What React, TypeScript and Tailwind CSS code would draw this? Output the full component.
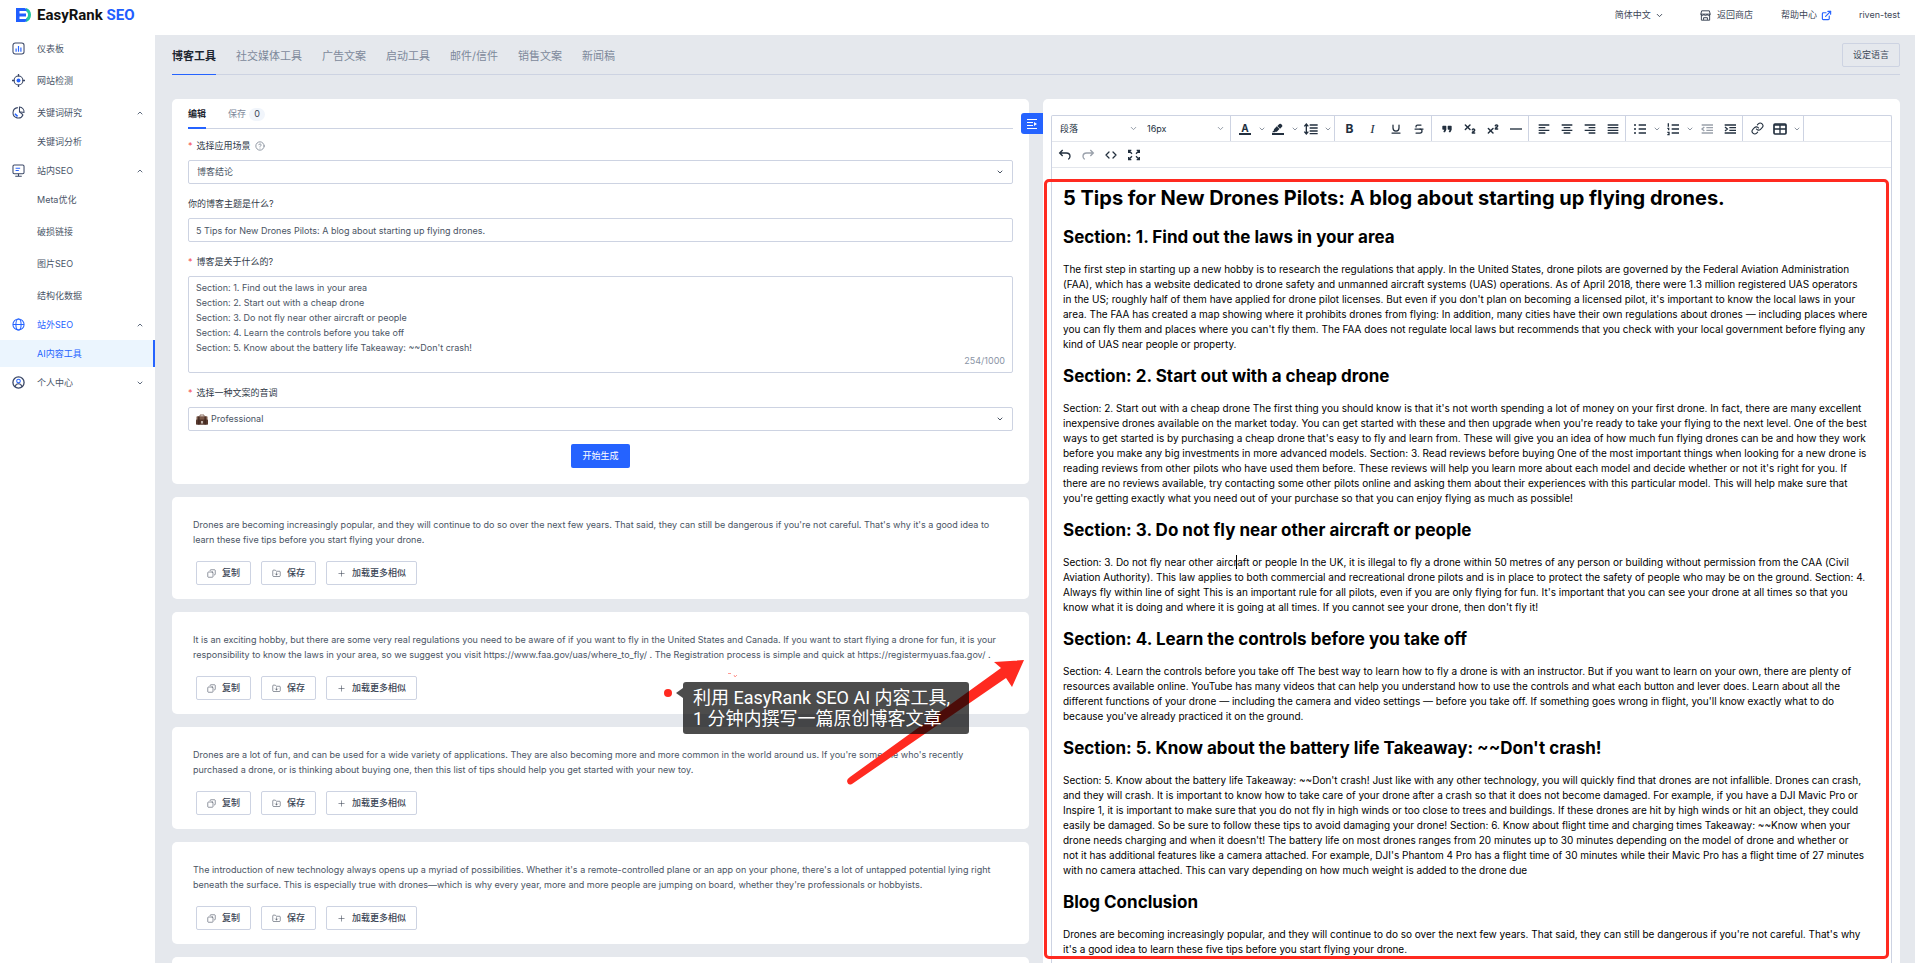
import React, { useState } from "react";
import {
  ChevronDown,
  ChevronUp,
  CircleHelp,
  Copy,
  FolderDown,
  Plus,
  ExternalLink,
  Underline,
  Strikethrough,
  Subscript,
  Superscript,
  Link as LinkIcon,
  Code,
} from "lucide-react";

const toolTabs = ["博客工具", "社交媒体工具", "广告文案", "启动工具", "邮件/信件", "销售文案", "新闻稿"];

const outline = `Section: 1. Find out the laws in your area
Section: 2. Start out with a cheap drone
Section: 3. Do not fly near other aircraft or people
Section: 4. Learn the controls before you take off
Section: 5. Know about the battery life Takeaway: ~~Don't crash!`;

const results = [
  `Drones are becoming increasingly popular, and they will continue to do so over the next few years. That said, they can still be dangerous if you're not careful. That's why it's a good idea to
learn these five tips before you start flying your drone.`,
  `It is an exciting hobby, but there are some very real regulations you need to be aware of if you want to fly in the United States and Canada. If you want to start flying a drone for fun, it is your
responsibility to know the laws in your area, so we suggest you visit https://www.faa.gov/uas/where_to_fly/ . The Registration process is simple and quick at https://registermyuas.faa.gov/ .`,
  `Drones are a lot of fun, and can be used for a wide variety of applications. They are also becoming more and more common in the world around us. If you're someone who's recently
purchased a drone, or is thinking about buying one, then this list of tips should help you get started with your new toy.`,
  `The introduction of new technology always opens up a myriad of possibilities. Whether it's a remote-controlled plane or an app on your phone, there's a lot of untapped potential lying right
beneath the surface. This is especially true with drones—which is why every year, more and more people are jumping on board, whether they're professionals or hobbyists.`,
];

const sections = [
  {
    title: "Section: 1. Find out the laws in your area",
    body: `The first step in starting up a new hobby is to research the regulations that apply. In the United States, drone pilots are governed by the Federal Aviation Administration
(FAA), which has a website dedicated to drone safety and unmanned aircraft systems (UAS) operations. As of April 2018, there were 1.3 million registered UAS operators
in the US; roughly half of them have applied for drone pilot licenses. But even if you don't plan on becoming a licensed pilot, it's important to know the local laws in your
area. The FAA has created a map showing where it prohibits drones from flying: In addition, many cities have their own regulations about drones — including places where
you can fly them and places where you can't fly them. The FAA does not regulate local laws but recommends that you check with your local government before flying any
kind of UAS near people or property.`,
  },
  {
    title: "Section: 2. Start out with a cheap drone",
    body: `Section: 2. Start out with a cheap drone The first thing you should know is that it's not worth spending a lot of money on your first drone. In fact, there are many excellent
inexpensive drones available on the market today. You can get started with these and then upgrade when you're ready to take your flying to the next level. One of the best
ways to get started is by purchasing a cheap drone that's easy to fly and learn from. These will give you an idea of how much fun flying drones can be and how they work
before you make any big investments in more advanced models. Section: 3. Read reviews before buying One of the most important things when looking for a new drone is
reading reviews from other pilots who have used them before. These reviews will help you learn more about each model and decide whether or not it's right for you. If
there are no reviews available, try contacting some other pilots online and asking them about their experiences with this particular model. This will help make sure that
you're getting exactly what you need out of your purchase so that you can enjoy flying as much as possible!`,
  },
  {
    title: "Section: 3. Do not fly near other aircraft or people",
    body: `Section: 3. Do not fly near other aircraft or people In the UK, it is illegal to fly a drone within 50 metres of any person or building without permission from the CAA (Civil
Aviation Authority). This law applies to both commercial and recreational drone pilots and is in place to protect the safety of people who may be on the ground. Section: 4.
Always fly within line of sight This is an important rule for all pilots, even if you are only flying for fun. It's important that you can see your drone at all times so that you
know what it is doing and where it is going at all times. If you cannot see your drone, then don't fly it!`,
  },
  {
    title: "Section: 4. Learn the controls before you take off",
    body: `Section: 4. Learn the controls before you take off The best way to learn how to fly a drone is with an instructor. But if you want to learn on your own, there are plenty of
resources available online. YouTube has many videos that can help you understand how to use the controls and what each button and lever does. Learn about all the
different functions of your drone — including the camera and video settings — before you take off. If something goes wrong in flight, you'll know exactly what to do
because you've already practiced it on the ground.`,
  },
  {
    title: "Section: 5. Know about the battery life Takeaway: ~~Don't crash!",
    body: `Section: 5. Know about the battery life Takeaway: ~~Don't crash! Just like with any other technology, you will quickly find that drones are not infallible. Drones can crash,
and they will crash. It is important to know how to take care of your drone after a crash so that it does not become damaged. For example, if you have a DJI Mavic Pro or
Inspire 1, it is important to make sure that you do not fly in high winds or too close to trees and buildings. If these drones are hit by high winds or hit an object, they could
easily be damaged. So be sure to follow these tips to avoid damaging your drone! Section: 6. Know about flight time and charging times Takeaway: ~~Know when your
drone needs charging and when it doesn't! The battery life on most drones ranges from 20 minutes up to 30 minutes depending on the model of drone and whether or
not it has additional features like a camera attached. For example, DJI's Phantom 4 Pro has a flight time of 30 minutes while their Mavic Pro has a flight time of 27 minutes
with no camera attached. This can vary depending on how much weight is added to the drone due`,
  },
  {
    title: "Blog Conclusion",
    body: `Drones are becoming increasingly popular, and they will continue to do so over the next few years. That said, they can still be dangerous if you're not careful. That's why
it's a good idea to learn these five tips before you start flying your drone.`,
  },
];

function MenuIcon({ name }: { name: string }) {
  return (
    <svg viewBox="0 0 20 20" className="size-[13px] shrink-0" fill="none" stroke="#3a4766" strokeWidth="1.6">
      {name === "board" && (
        <>
          <rect x="1.5" y="1.5" width="17" height="17" rx="3.5" />
          <path d="M6.3 15V10M10 15V6M13.7 15V8.5" stroke="#2563ff" strokeWidth="1.8" />
        </>
      )}
      {name === "target" && (
        <>
          <circle cx="10" cy="10" r="6.8" />
          <path d="M10 0v4M10 16v4M0 10h4M16 10h4" strokeWidth="2" />
          <circle cx="10" cy="10" r="3" fill="#2563ff" stroke="none" />
        </>
      )}
      {name === "pie" && (
        <>
          <path d="M9 2.5a8 8 0 1 0 8 11" />
          <path d="M11.500 1.500a7.500 7.500 0 0 1 7 8.500l-7-1z" />
          <path d="M11.500 9l5.500 4.500" />
          <path d="M4.500 12l4 4" stroke="#2563ff" strokeWidth="2.4" />
        </>
      )}
      {name === "screen" && (
        <>
          <rect x="1.5" y="1.5" width="17" height="13.5" rx="2" />
          <path d="M10 15v3.5M5 18.7h10" />
          <path d="M5.5 6.5h7M5.5 10h5" stroke="#2563ff" strokeWidth="1.8" />
        </>
      )}
      {name === "globe" && (
        <g stroke="#2563ff">
          <circle cx="10" cy="10" r="8.6" />
          <ellipse cx="10" cy="10" rx="4" ry="8.6" />
          <path d="M1.5 10h17" />
        </g>
      )}
      {name === "user" && (
        <>
          <circle cx="10" cy="10" r="8.6" strokeWidth="2" />
          <circle cx="10" cy="7.8" r="2.8" stroke="#2563ff" />
          <path d="M5 16.2c.6-3 2.4-4.4 5-4.4s4.400 1.400 5 4.400" />
        </>
      )}
    </svg>
  );
}

const menu = [
  { name: "仪表板", icon: "board" },
  { name: "网站检测", icon: "target" },
  { name: "关键词研究", icon: "pie", children: ["关键词分析"] },
  { name: "站内SEO", icon: "screen", children: ["Meta优化", "破损链接", "图片SEO", "结构化数据"] },
  { name: "站外SEO", icon: "globe", children: ["AI内容工具"], active: true },
  { name: "个人中心", icon: "user", closed: true },
];

function Sidebar() {
  return (
    <aside className="w-[155px] shrink-0 bg-white text-[#4a5568]">
      <ul>
        {menu.map((item) => (
          <li key={item.name} className={item.children ? "" : "mb-[5px]"}>
            <a
              href="#"
              className={`flex h-[27px] items-center gap-3 pl-3 pr-[11px] ${item.active ? "text-[#2563ff]" : ""}`}
            >
              <MenuIcon name={item.icon} />
              <span className="flex-1">{item.name}</span>
              {item.children && <ChevronUp className="size-2 text-[#5f6b7e]" strokeWidth={3} />}
              {item.closed && <ChevronDown className="size-2 text-[#5f6b7e]" strokeWidth={3} />}
            </a>
            {item.children && (
              <ul className="my-[2px] flex flex-col gap-[5px]">
                {item.children.map((child) => (
                  <li key={child}>
                    <a
                      href="#"
                      className={`flex h-[27px] items-center pl-[37px] ${
                        item.active ? "border-r-2 border-[#2563ff] bg-[#ebf5fe] text-[#2563ff]" : ""
                      }`}
                    >
                      {child}
                    </a>
                  </li>
                ))}
              </ul>
            )}
          </li>
        ))}
      </ul>
    </aside>
  );
}

function Header() {
  return (
    <header className="flex h-[35px] shrink-0 items-center bg-white pl-4 pr-[15px] pb-[5px] text-[#3c4656]">
      <a href="#" className="flex items-center gap-[6px]">
        <svg viewBox="0 0 30 28" className="h-[14px] w-[15px]">
          <path d="M20 0c6.500 2 10 7 10 13.500C30 21 26 26 20 28v-7c2.500-1.500 4-4 4-7.500S22.500 8 20 6.500z" fill="#22c5a0" />
          <path d="M0 0h17q3 0 4 3v3H7v5h13v6H7v5h14v3q-1 3-4 3H0z" fill="#1f5eff" />
        </svg>
        <span className="font-['Roboto',sans-serif] text-[15px] font-bold leading-5 text-[#111]">
          EasyRank <span className="text-[#1f5eff]">SEO</span>
        </span>
      </a>
      <nav className="ml-auto flex items-center">
        <button className="flex items-center gap-1">
          简体中文 <ChevronDown className="size-[9px]" strokeWidth={2.5} />
        </button>
        <a href="#" className="ml-9 flex items-center gap-[6px]">
          <svg viewBox="0 0 20 20" className="size-[11px]" fill="none" stroke="currentColor" strokeWidth="1.8">
            <path d="M3 1.500h14l1.500 6H1.500zM2.500 7.500v11h15v-11M1.500 7.500c0 3.500 5.600 3.500 5.600 0 0 3.500 5.800 3.500 5.800 0 0 3.500 5.600 3.500 5.600 0M6.500 18v-4h7v4" />
          </svg>
          返回商店
        </a>
        <a href="#" className="ml-7 flex items-center gap-1">
          帮助中心 <ExternalLink className="size-[11px] text-[#2563ff]" strokeWidth={2.5} />
        </a>
        <a href="#" className="ml-[27px]">
          riven-test
        </a>
      </nav>
    </header>
  );
}

function Label({ htmlFor, required, children }: { htmlFor: string; required?: boolean; children: React.ReactNode }) {
  return (
    <label htmlFor={htmlFor} className="mt-[13px] mb-[7px] flex h-[14px] items-center gap-1 text-[#2f3947]">
      {required && <span className="text-[#f5484d]">*</span>}
      {children}
    </label>
  );
}

function Briefcase() {
  return (
    <svg viewBox="0 0 24 22" className="ml-[7px] h-[11px] w-3 shrink-0">
      <path d="M8 5V2h8v3" fill="none" stroke="#8a6f60" strokeWidth="2" />
      <rect x="1" y="4.500" width="22" height="8" rx="1.500" fill="#7b5a4a" />
      <rect x="0" y="11" width="24" height="10.500" rx="1.500" fill="#56382d" />
      <rect x="4.500" y="5" width="2.500" height="16" fill="#3f2720" />
      <rect x="17" y="5" width="2.500" height="16" fill="#3f2720" />
      <rect x="10.500" y="14" width="3" height="5" fill="#e8e0da" />
    </svg>
  );
}

const field = "w-full rounded-[2px] border border-[#cdd3e2] bg-white text-[#4a5464]";

function EditForm() {
  const [topic, setTopic] = useState("5 Tips for New Drones Pilots: A blog about starting up flying drones.");
  const [about, setAbout] = useState(outline);
  return (
    <section className="rounded-[5px] bg-white px-4 pb-4">
      <div className="mb-[-3px] flex h-[30px] items-stretch gap-[22px] border-b border-[#cdd3e2]">
        <button className="-mb-px border-b-2 border-[#2563ff] pt-[2px] font-bold text-[#1d2530]">编辑</button>
        <button className="flex items-center gap-[3px] pt-px text-[#7d899b]">
          保存
          <span className="flex h-[13px] w-4 items-center justify-center rounded-full bg-[#f1f5fb] text-[#3c4656]">0</span>
        </button>
      </div>
      <Label htmlFor="scene" required>
        选择应用场景
        <CircleHelp className="size-[10px] text-[#7d8794]" strokeWidth={2} />
      </Label>
      <div className={`${field} flex h-6 items-center`}>
        <select id="scene" className="h-full flex-1 appearance-none bg-transparent pl-2 outline-none">
          <option>博客结论</option>
        </select>
        <ChevronDown className="mr-2 size-2" strokeWidth={3} />
      </div>
      <Label htmlFor="topic">你的博客主题是什么?</Label>
      <input
        id="topic"
        className={`${field} block h-6 px-[7px] outline-none`}
        value={topic}
        onChange={(e) => setTopic(e.target.value)}
      />
      <Label htmlFor="about" required>
        博客是关于什么的?
      </Label>
      <div className="relative">
        <textarea
          id="about"
          className={`${field} block h-[97px] resize-none px-[7px] py-[3px] leading-[15px] outline-none`}
          value={about}
          onChange={(e) => setAbout(e.target.value)}
        />
        <span className="absolute bottom-[5px] right-2 text-[#8a94a6]">254/1000</span>
      </div>
      <Label htmlFor="tone" required>
        选择一种文案的音调
      </Label>
      <div className={`${field} flex h-6 items-center`}>
        <Briefcase />
        <select id="tone" className="h-full flex-1 appearance-none bg-transparent pl-[3px] outline-none">
          <option>Professional</option>
        </select>
        <ChevronDown className="mr-2 size-2" strokeWidth={3} />
      </div>
      <div className="mt-[13px] flex justify-center">
        <button className="h-6 rounded-[2px] bg-[#2563ff] px-[11px] text-white">开始生成</button>
      </div>
    </section>
  );
}

function ResultCard({ text }: { text: string }) {
  const btn = "flex h-6 items-center gap-[6px] rounded-[2px] border border-[#cdd3e2] px-[10px] font-medium text-[#3c4656]";
  return (
    <section className="h-[102px] shrink-0 rounded-[5px] bg-white px-[21px] pt-5">
      <p className="whitespace-pre-line leading-[15px] text-[#4a5464]">{text}</p>
      <div className="ml-[3px] mt-[14px] flex gap-[10px]">
        <button className={btn}>
          <Copy className="size-[9px] -scale-x-100" strokeWidth={1.5} />
          复制
        </button>
        <button className={btn}>
          <FolderDown className="size-[9px]" strokeWidth={1.5} />
          保存
        </button>
        <button className={btn}>
          <Plus className="size-[9px]" strokeWidth={1.5} />
          加载更多相似
        </button>
      </div>
    </section>
  );
}

function Stroke({ d, children }: { d?: string; children?: React.ReactNode }) {
  return (
    <svg viewBox="0 0 24 24" className="size-4" fill="none" stroke="currentColor" strokeWidth="2">
      {d && <path d={d} />}
      {children}
    </svg>
  );
}

function Tool({ label, split, dim, children }: { label: string; split?: boolean; dim?: boolean; children: React.ReactNode }) {
  return (
    <div className="flex">
      <button
        aria-label={label}
        className={`flex h-6 items-center justify-center ${split ? "w-[22px]" : "w-[23px]"} ${dim ? "text-[#9aa1ab]" : "text-[#222f3e]"}`}
      >
        {children}
      </button>
      {split && (
        <button aria-label={`${label} 选项`} className="flex h-6 w-[11px] items-center justify-center text-[#8d95a1]">
          <ChevronDown className="size-2" strokeWidth={3} />
        </button>
      )}
    </div>
  );
}

function Group({ children }: { children: React.ReactNode }) {
  return <div className="flex h-[25px] items-center border-r border-[#cdd3e2] pl-[3px] pr-px">{children}</div>;
}

function ToolSelect({ label, value }: { label: string; value: string }) {
  return (
    <div className="flex h-6 w-[87px] items-center">
      <select aria-label={label} className="h-full flex-1 appearance-none bg-transparent pl-[5px] text-[#222f3e] outline-none">
        <option>{value}</option>
      </select>
      <ChevronDown className="mr-1 size-[9px] text-[#8d95a1]" strokeWidth={2.5} />
    </div>
  );
}

function Toolbar() {
  return (
    <div>
      <div className="flex h-[26px] border-b border-[#e3e6ec]">
        <Group>
          <ToolSelect label="段落格式" value="段落" />
          <ToolSelect label="字号" value="16px" />
        </Group>
        <Group>
          <Tool label="文字颜色" split>
            <span className="w-3 border-b-2 border-current text-center text-[10px] font-bold leading-[10px]">A</span>
          </Tool>
          <Tool label="背景颜色" split>
            <svg viewBox="0 0 24 24" className="size-4" fill="currentColor">
              <rect x="3" y="18" width="18" height="3" />
              <path d="M7.700 16.700H3l3.300-3.300-.7-.8L10.200 8l4 4.100-4 4.200c-.2.200-.6.200-.8 0l-.6-.7-1.100 1.100zm5-7.500L11 7.400l3-2.900a2 2 0 0 1 2.600 0L18 6c.7.700.7 2 0 2.700l-2.900 2.900-1.800-1.800-.5-.6" />
            </svg>
          </Tool>
          <Tool label="行高" split>
            <Stroke d="M10 6h12M10 10.500h12M10 15h12M10 19h12M5 5v14M2 8l3-3.500L8 8M2 16l3 3.500L8 16" />
          </Tool>
        </Group>
        <Group>
          <Tool label="粗体">
            <span className="text-[12px] font-bold">B</span>
          </Tool>
          <Tool label="斜体">
            <span className="font-['Liberation_Serif',serif] text-[13px] italic">I</span>
          </Tool>
          <Tool label="下划线">
            <Underline className="size-3" strokeWidth={2.5} />
          </Tool>
          <Tool label="删除线">
            <Strikethrough className="size-3" strokeWidth={2.5} />
          </Tool>
        </Group>
        <Group>
          <Tool label="引用">
            <svg viewBox="0 0 24 24" className="size-4" fill="currentColor">
              <path d="M7.500 17h.9c.4 0 .7-.2.900-.6L11 13V8c0-.6-.4-1-1-1H6a1 1 0 0 0-1 1v4c0 .6.400 1 1 1h2l-1.300 2.700a1 1 0 0 0 .8 1.300zm8 0h.9c.4 0 .7-.2.900-.6L19 13V8c0-.6-.4-1-1-1h-4a1 1 0 0 0-1 1v4c0 .6.400 1 1 1h2l-1.300 2.700a1 1 0 0 0 .8 1.300z" />
            </svg>
          </Tool>
          <Tool label="下标">
            <Subscript className="size-[14px]" strokeWidth={2.5} />
          </Tool>
          <Tool label="上标">
            <Superscript className="size-[14px]" strokeWidth={2.5} />
          </Tool>
          <Tool label="分割线">
            <Stroke d="M3 12h18" />
          </Tool>
        </Group>
        <Group>
          <Tool label="左对齐">
            <Stroke d="M4 6h16M4 10h10M4 14h16M4 18h10" />
          </Tool>
          <Tool label="居中">
            <Stroke d="M4 6h16M7 10h10M4 14h16M7 18h10" />
          </Tool>
          <Tool label="右对齐">
            <Stroke d="M4 6h16M10 10h10M4 14h16M10 18h10" />
          </Tool>
          <Tool label="两端对齐">
            <Stroke d="M4 6h16M4 10h16M4 14h16M4 18h16" />
          </Tool>
        </Group>
        <Group>
          <Tool label="项目符号" split>
            <Stroke d="M10 6h11M10 12h11M10 18h11M3 6h3M3 12h3M3 18h3" />
          </Tool>
          <Tool label="编号列表" split>
            <Stroke d="M10 6h11M10 12h11M10 18h11M5 3.500v5M3.500 11h2v3M3.500 17h2.500v3.500h-2.500" />
          </Tool>
          <Tool label="减少缩进" dim>
            <Stroke d="M4 6h17M11 10h10M11 14h10M4 18h17M8 9l-3.500 3L8 15" />
          </Tool>
          <Tool label="增加缩进">
            <Stroke d="M4 6h17M11 10h10M11 14h10M4 18h17M4.500 9L8 12l-3.500 3" />
          </Tool>
        </Group>
        <Group>
          <Tool label="链接">
            <LinkIcon className="size-[13px]" />
          </Tool>
          <Tool label="表格" split>
            <Stroke>
              <rect x="3" y="4.500" width="18" height="15" rx="1.500" strokeWidth="2.500" />
              <path d="M12 5v14M3 12h18M3 6h18" />
            </Stroke>
          </Tool>
        </Group>
      </div>
      <div className="flex h-[26px] items-center border-b border-[#e3e6ec] pl-px">
        <Tool label="撤销">
          <Stroke d="M8.500 4.500L4 9l4.500 4.500M4.500 9H14c3.500 0 5.500 2 5.500 5 0 2-.8 3.500-2.500 4.500" />
        </Tool>
        <Tool label="重做" dim>
          <Stroke d="M15.500 4.500L20 9l-4.500 4.500M19.500 9H10c-3.500 0-5.500 2-5.500 5 0 2 .8 3.500 2.500 4.500" />
        </Tool>
        <Tool label="源代码">
          <Code className="size-3" strokeWidth={2.5} />
        </Tool>
        <Tool label="全屏">
          <Stroke d="M4 9V5h4M4.500 5.500L9 10M20 9V5h-4M19.500 5.500L15 10M4 15v4h4M4.500 18.500L9 14M20 15v4h-4M19.500 18.500L15 14" />
        </Tool>
      </div>
    </div>
  );
}

function Editor() {
  return (
    <section className="relative flex min-w-0 flex-col rounded-t-[5px] bg-white px-2 pt-4">
      <button
        aria-label="收起"
        className="absolute -left-[22px] top-[14px] flex h-[21px] w-[22px] items-center justify-center rounded-l-[3px] bg-[#2563ff] text-white"
      >
        <svg viewBox="0 0 12 12" className="size-3" fill="none" stroke="currentColor">
          <path d="M1 1.500h10M1 4.500h6M1 7.500h6M1 10.500h10" />
          <path d="M8 4l3 2-3 2z" fill="currentColor" stroke="none" />
        </svg>
      </button>
      <div className="flex-1 rounded-t-[2px] border border-b-0 border-[#cdd3e2]">
        <Toolbar />
        <article className="whitespace-pre-line pl-[11px] pr-2 pt-[17px] text-black">
          <h1 className="mb-4 text-[20px] font-bold leading-[26px]">
            5 Tips for New Drones Pilots: A blog about starting up flying drones.
          </h1>
          {sections.map((s) => (
            <div key={s.title}>
              <h2 className="text-[17px] font-bold leading-5">{s.title}</h2>
              <p className="mb-[14px] mt-[15px] text-[10px] leading-[15px]">{s.body}</p>
            </div>
          ))}
        </article>
      </div>
      <div className="pointer-events-none absolute left-px right-[11px] top-[80px] h-[780px] rounded-[5px] border-[3px] border-[#ff2a20]" />
      <div className="absolute left-[193px] top-[456px] h-[14px] w-px bg-black" />
    </section>
  );
}

// red arrow and caption drawn over the result cards
function Callout() {
  return (
    <div className="pointer-events-none">
      <svg viewBox="0 0 180 128" className="absolute left-[674px] top-[560px] h-[128px] w-[180px]" fill="#ff2a20">
        <path d="M178 1L166 28 160 19 6 125Q2 127 1 122 1 120 4 118L155 9 148 3z" />
      </svg>
      <svg viewBox="0 0 10 6" className="absolute left-[556px] top-[573px] h-[6px] w-[10px]" stroke="#ff9a94" fill="none">
        <path d="M0 1.500h3M6 3l1 2 2-2" />
      </svg>
      <div className="absolute left-[492px] top-[590px] size-2 rounded-full bg-[#ff2a20]" />
      <svg viewBox="0 0 7 10" className="absolute left-[504px] top-[589px] h-[10px] w-[7px]">
        <path d="M7 0v10L0 5z" fill="#000" fillOpacity="0.7" />
      </svg>
      <div className="absolute left-[511px] top-[583px] h-[52px] w-[286px] whitespace-pre rounded-[3px] bg-black/70 pl-[10px] pt-[5px] font-['Roboto','Noto_Sans_CJK_SC',sans-serif] text-[18px] leading-[21px] text-white">
        {"利用 EasyRank SEO AI 内容工具,\n1 分钟内撰写一篇原创博客文章"}
      </div>
    </div>
  );
}

export default function App() {
  const [tab, setTab] = useState(0);
  return (
    <div className="flex h-screen flex-col overflow-hidden bg-white font-[Inter,'Noto_Sans_CJK_SC',sans-serif] text-[9px] leading-[14px]">
      <Header />
      <div className="flex min-h-0 flex-1">
        <Sidebar />
        <main className="flex min-w-0 flex-1 flex-col bg-[#e5e8ed] pl-[17px] pr-[15px]">
          <div className="flex h-10 shrink-0 items-stretch border-b border-[#cdd3e2] text-[11px]">
            <div className="-mb-px flex gap-5">
              {toolTabs.map((name, i) => (
                <button
                  key={name}
                  onClick={() => setTab(i)}
                  className={
                    i === tab
                      ? "border-b border-[#2563ff] pt-[2px] font-bold text-[#1d2530]"
                      : "border-b border-transparent pt-[2px] text-[#7d899b]"
                  }
                >
                  {name}
                </button>
              ))}
            </div>
            <button className="ml-auto mt-2 h-6 rounded-[2px] border border-[#cdd3e2] px-[10px] text-[9px] text-[#3c4656]">
              设定语言
            </button>
          </div>
          <div className="mt-6 grid min-h-0 flex-1 grid-cols-2 gap-[14px]">
            <div className="relative flex min-h-0 min-w-0 flex-col gap-[13px]">
              <EditForm />
              {results.map((text) => (
                <ResultCard key={text} text={text} />
              ))}
              <section className="h-[102px] shrink-0 rounded-[5px] bg-white" />
              <Callout />
            </div>
            <Editor />
          </div>
        </main>
      </div>
    </div>
  );
}
